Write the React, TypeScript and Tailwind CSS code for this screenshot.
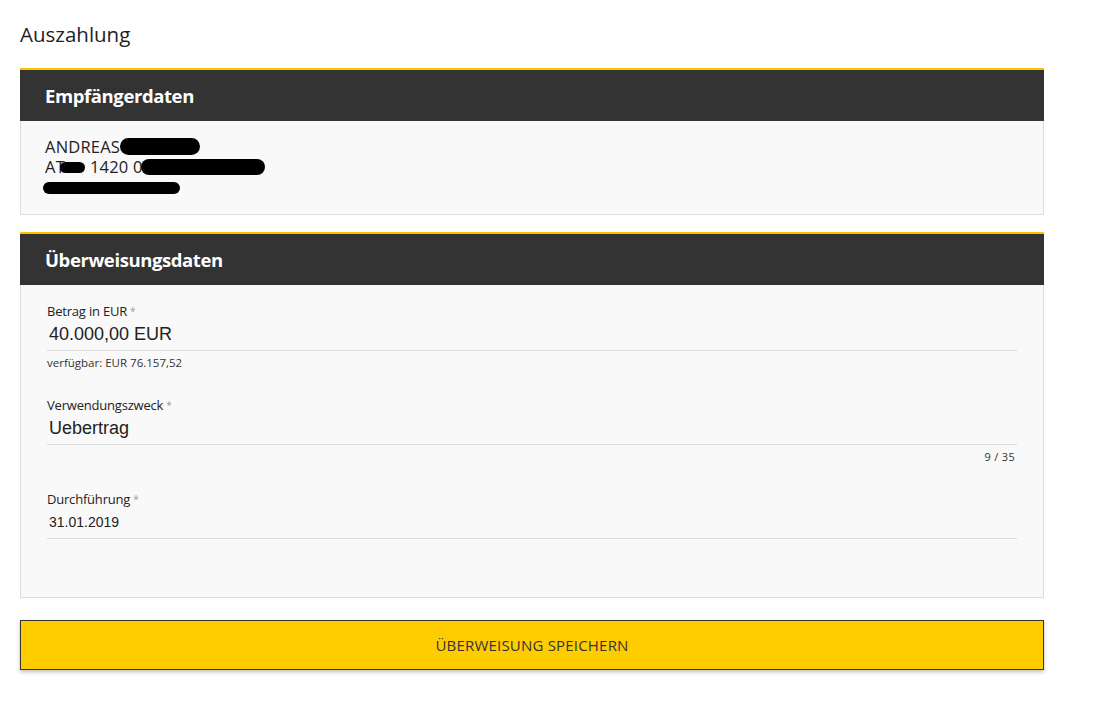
import React from "react";

const UI = { fontFamily: '"Open Sans", "Noto Sans", sans-serif' };
const ARIAL = { fontFamily: '"Liberation Sans", Arial, sans-serif' };

function CardHeader({ title }: { title: string }) {
  return (
    <div className="h-[53px] border-t-2 border-[#fcc200] bg-[#333333] pl-[25px] flex items-center">
      <h2 className="text-[18.5px] font-bold tracking-[-0.4px] text-white" style={UI}>
        {title}
      </h2>
    </div>
  );
}

function Field({
  label,
  value,
  valueClass,
  hint,
  counter,
}: {
  label: string;
  value: string;
  valueClass: string;
  hint?: string;
  counter?: string;
}) {
  return (
    <div>
      <div className="h-4 text-[13px] leading-4 text-[#222] tracking-[-0.2px]" style={UI}>
        {label}
        <span className="ml-[3px] text-[10px] text-[#999] align-top">*</span>
      </div>
      <div className="h-[32px] border-b border-[#dcdcdc] flex items-center pl-[2px]">
        <span className={valueClass} style={ARIAL}>
          {value}
        </span>
      </div>
      {hint !== undefined && (
        <div className="h-[25px] pt-[4px] text-[11.5px] leading-4 text-[#333]" style={UI}>
          {hint}
        </div>
      )}
      {counter !== undefined && (
        <div
          className="h-[25px] pt-[4px] text-right pr-[2px] text-[11px] leading-4 text-[#333] tracking-[0.3px]"
          style={UI}
        >
          {counter}
        </div>
      )}
    </div>
  );
}

export default function App() {
  return (
    <div className="min-h-[702px] w-[1099px] bg-white px-5 pt-[19px]">
      <h1 className="text-[20.5px] leading-[30px] text-[#222]" style={UI}>
        Auszahlung
      </h1>

      <div className="mt-[19px] w-[1024px]">
        <CardHeader title="Empfängerdaten" />
        <div className="border border-t-0 border-[#dddddd] bg-[#f9f9f9] pl-[24px] pt-[16px] pb-[17px]">
          <div className="text-[16.5px] leading-5 text-[#222] font-medium tracking-[0.2px]" style={UI}>
            <div className="flex items-center h-5">
              <span>ANDREAS</span>
              <span className="ml-[0px] mt-[-1px] h-[17px] w-[80px] rounded-[9px] bg-black" />
            </div>
            <div className="flex items-center h-5">
              <span>AT</span>
              <span className="ml-[-5px] mt-[1px] h-[11px] w-[25px] rounded-[6px] bg-black" />
              <span className="ml-[5px]">1420 0</span>
              <span className="ml-[-2px] h-[16px] w-[124px] rounded-[8px] bg-black" />
            </div>
            <div className="flex items-center h-5">
              <span className="ml-[-2px] mt-[2px] h-[12px] w-[137px] rounded-[7px] bg-black" />
            </div>
          </div>
        </div>
      </div>

      <div className="mt-[17px] w-[1024px]">
        <CardHeader title="Überweisungsdaten" />
        <div className="border border-t-0 border-[#dddddd] bg-[#f9f9f9] pl-[26px] pr-[26px] pt-[18px] pb-[58px]">
          <div className="flex flex-col gap-[21px]">
            <Field
              label="Betrag in EUR"
              value="40.000,00 EUR"
              valueClass="text-[18px] text-[#222]"
              hint="verfügbar: EUR 76.157,52"
            />
            <Field
              label="Verwendungszweck"
              value="Uebertrag"
              valueClass="text-[18px] text-[#222]"
              counter="9 / 35"
            />
            <Field label="Durchführung" value="31.01.2019" valueClass="text-[14px] text-[#222]" />
          </div>
        </div>
      </div>

      <button
        className="mt-[22px] h-[50px] w-[1024px] border border-[#333] bg-[#ffcc00] shadow-[0_2px_4px_rgba(0,0,0,0.25)] text-[15px] font-normal text-[#333] tracking-[0.2px]"
        style={UI}
      >
        ÜBERWEISUNG SPEICHERN
      </button>
    </div>
  );
}
